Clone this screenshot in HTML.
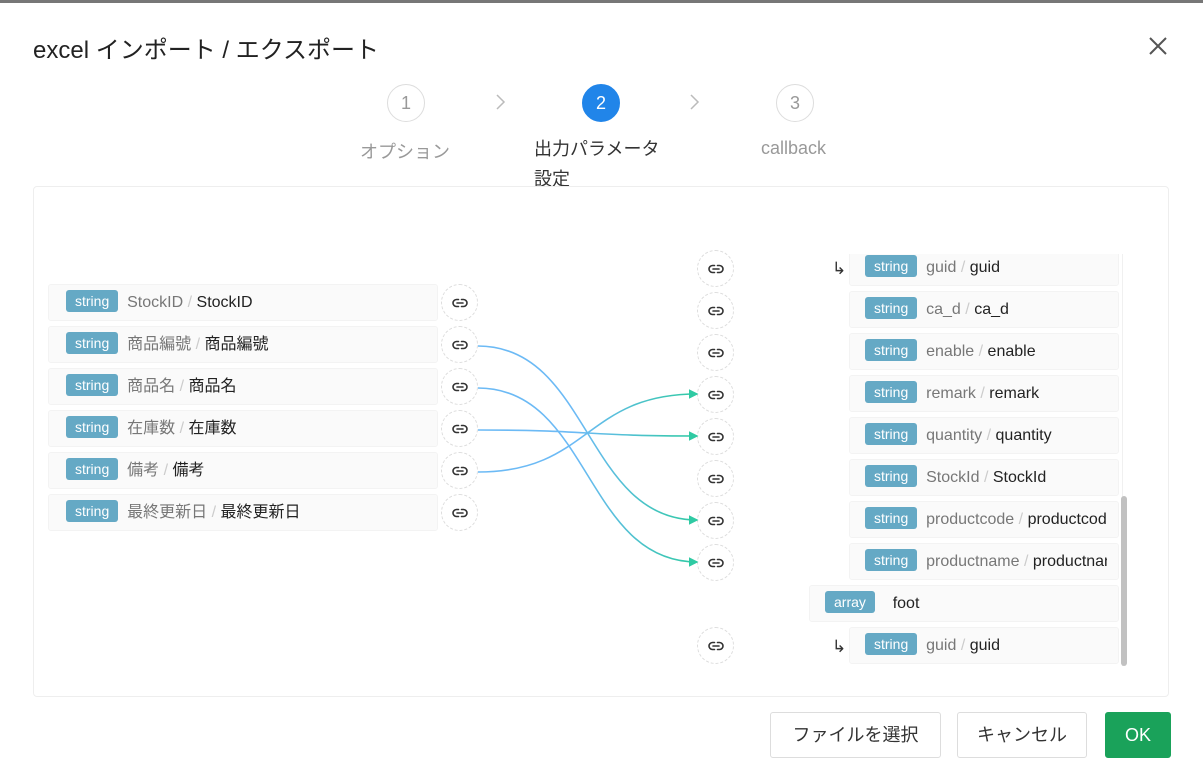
<!DOCTYPE html>
<html><head><meta charset="utf-8"><style>
*{box-sizing:border-box;margin:0;padding:0}
body{width:1203px;height:784px;overflow:hidden;background:#fff;font-family:"Liberation Sans","Noto Sans CJK JP",sans-serif;position:relative;color:#333}
.abs{position:absolute}
.topbar{left:0;top:0;width:1203px;height:3px;background:#777}
.modal{left:0;top:3px;width:1203px;height:781px;background:#fff;border-radius:6px 6px 0 0}
.title{left:33px;top:30px;font-size:24px;color:#222}
.step{width:38px;height:38px;border-radius:50%;border:1px solid #ddd;color:#999;font-size:18px;text-align:center;line-height:36px;top:84px}
.lbl{font-size:18px;color:#999;top:138px}
.box{left:33px;top:186px;width:1136px;height:511px;border:1px solid #eee;border-radius:4px}
.row{height:37px;background:#fafafa;border:1px solid #f3f3f3;border-radius:3px;font-size:16px;line-height:35px;white-space:nowrap;overflow:hidden}
.rr{padding-right:11px}
.in{display:block;overflow:hidden;white-space:nowrap}
.bd{display:inline-block;background:#65a9c5;color:#fff;font-size:14px;line-height:22px;height:22px;padding:0 9px;border-radius:3px;vertical-align:middle;margin-top:-3px}
.g{color:#777}.s{color:#ccc}.v{color:#222}
.lk{width:37px;height:37px;border-radius:50%;border:1px dashed #ddd;display:flex;align-items:center;justify-content:center;background:#fff}
.arr{font-size:17px;color:#333}
.btn{top:712px;height:46px;border:1px solid #ddd;border-radius:3px;font-size:18px;text-align:center;line-height:44px;color:#333;background:#fff}
</style></head><body>
<div class="abs topbar"></div>
<div class="abs modal"></div>
<div class="abs title">excel インポート / エクスポート</div>
<svg class="abs" style="left:1148px;top:36px" width="20" height="20"><path d="M2 2L18 18M18 2L2 18" stroke="#555" stroke-width="2"/></svg>

<div class="abs step" style="left:387px">1</div>
<div class="abs step" style="left:582px;background:#2185e9;border-color:#2185e9;color:#fff">2</div>
<div class="abs step" style="left:776px">3</div>
<svg class="abs" style="left:495px;top:93px" width="12" height="18"><path d="M2 2L9 9L2 16" stroke="#bbb" stroke-width="1.5" fill="none"/></svg>
<svg class="abs" style="left:689px;top:93px" width="12" height="18"><path d="M2 2L9 9L2 16" stroke="#bbb" stroke-width="1.5" fill="none"/></svg>
<div class="abs lbl" style="left:360px">オプション</div>
<div class="abs lbl" style="left:534px;color:#333;line-height:30px;top:134px">出力パラメータ<br>設定</div>
<div class="abs lbl" style="left:761px">callback</div>

<div class="abs box"></div>

<div class="abs row" style="left:48px;top:284px;width:390px;padding-left:17px"><span class="bd">string</span> <span class="g">&nbsp;StockID</span> <span class="s">/</span> <span class="v">StockID</span></div>
<div class="abs row" style="left:48px;top:326px;width:390px;padding-left:17px"><span class="bd">string</span> <span class="g">&nbsp;商品編號</span> <span class="s">/</span> <span class="v">商品編號</span></div>
<div class="abs row" style="left:48px;top:368px;width:390px;padding-left:17px"><span class="bd">string</span> <span class="g">&nbsp;商品名</span> <span class="s">/</span> <span class="v">商品名</span></div>
<div class="abs row" style="left:48px;top:410px;width:390px;padding-left:17px"><span class="bd">string</span> <span class="g">&nbsp;在庫数</span> <span class="s">/</span> <span class="v">在庫数</span></div>
<div class="abs row" style="left:48px;top:452px;width:390px;padding-left:17px"><span class="bd">string</span> <span class="g">&nbsp;備考</span> <span class="s">/</span> <span class="v">備考</span></div>
<div class="abs row" style="left:48px;top:494px;width:390px;padding-left:17px"><span class="bd">string</span> <span class="g">&nbsp;最終更新日</span> <span class="s">/</span> <span class="v">最終更新日</span></div>

<svg width="0" height="0" style="position:absolute"><defs><symbol id="lnk" viewBox="0 0 16 16"><path d="M6.5 4.5H4.5a3.5 3.5 0 0 0 0 7h2M9.5 4.5h2a3.5 3.5 0 0 1 0 7h-2M5 8h6" stroke="#333" stroke-width="1.6" fill="none" stroke-linecap="round"/></symbol></defs></svg>

<div class="abs lk" style="left:441px;top:284px"><svg width="16" height="16"><use href="#lnk"/></svg></div>
<div class="abs lk" style="left:441px;top:326px"><svg width="16" height="16"><use href="#lnk"/></svg></div>
<div class="abs lk" style="left:441px;top:368px"><svg width="16" height="16"><use href="#lnk"/></svg></div>
<div class="abs lk" style="left:441px;top:410px"><svg width="16" height="16"><use href="#lnk"/></svg></div>
<div class="abs lk" style="left:441px;top:452px"><svg width="16" height="16"><use href="#lnk"/></svg></div>
<div class="abs lk" style="left:441px;top:494px"><svg width="16" height="16"><use href="#lnk"/></svg></div>

<div class="abs lk" style="left:697px;top:250px"><svg width="16" height="16"><use href="#lnk"/></svg></div>
<div class="abs lk" style="left:697px;top:292px"><svg width="16" height="16"><use href="#lnk"/></svg></div>
<div class="abs lk" style="left:697px;top:334px"><svg width="16" height="16"><use href="#lnk"/></svg></div>
<div class="abs lk" style="left:697px;top:376px"><svg width="16" height="16"><use href="#lnk"/></svg></div>
<div class="abs lk" style="left:697px;top:418px"><svg width="16" height="16"><use href="#lnk"/></svg></div>
<div class="abs lk" style="left:697px;top:460px"><svg width="16" height="16"><use href="#lnk"/></svg></div>
<div class="abs lk" style="left:697px;top:502px"><svg width="16" height="16"><use href="#lnk"/></svg></div>
<div class="abs lk" style="left:697px;top:544px"><svg width="16" height="16"><use href="#lnk"/></svg></div>
<div class="abs lk" style="left:697px;top:627px"><svg width="16" height="16"><use href="#lnk"/></svg></div>

<svg class="abs" style="left:0;top:0" width="1203" height="784">
<defs><linearGradient id="gr" gradientUnits="userSpaceOnUse" x1="478" y1="0" x2="697" y2="0"><stop offset="0" stop-color="#6cbaf5"/><stop offset="0.45" stop-color="#6cbaf5"/><stop offset="1" stop-color="#2fcaa3"/></linearGradient>
<marker id="m" markerWidth="6" markerHeight="6" refX="5" refY="3" orient="auto"><path d="M0 0L6 3L0 6z" fill="#2fcaa3"/></marker></defs>
<g fill="none" stroke="url(#gr)" stroke-width="1.6" marker-end="url(#m)">
<path d="M478 346C590 346 585 520 697 520"/>
<path d="M478 388C590 388 585 562 697 562"/>
<path d="M478 430C590 430 585 436 697 436"/>
<path d="M478 472C590 472 585 394 697 394"/>
</g></svg>

<div class="abs" style="left:800px;top:254px;width:330px;height:412px;overflow:hidden">
<div class="abs row rr" style="left:49px;top:-5px;width:270px;padding-left:15px"><span class="in"><span class="bd">string</span> <span class="g">&nbsp;guid</span> <span class="s">/</span> <span class="v">guid</span></span></div>
<div class="abs arr" style="left:32px;top:5px">↳</div>
<div class="abs row rr" style="left:49px;top:37px;width:270px;padding-left:15px"><span class="in"><span class="bd">string</span> <span class="g">&nbsp;ca_d</span> <span class="s">/</span> <span class="v">ca_d</span></span></div>
<div class="abs row rr" style="left:49px;top:79px;width:270px;padding-left:15px"><span class="in"><span class="bd">string</span> <span class="g">&nbsp;enable</span> <span class="s">/</span> <span class="v">enable</span></span></div>
<div class="abs row rr" style="left:49px;top:121px;width:270px;padding-left:15px"><span class="in"><span class="bd">string</span> <span class="g">&nbsp;remark</span> <span class="s">/</span> <span class="v">remark</span></span></div>
<div class="abs row rr" style="left:49px;top:163px;width:270px;padding-left:15px"><span class="in"><span class="bd">string</span> <span class="g">&nbsp;quantity</span> <span class="s">/</span> <span class="v">quantity</span></span></div>
<div class="abs row rr" style="left:49px;top:205px;width:270px;padding-left:15px"><span class="in"><span class="bd">string</span> <span class="g">&nbsp;StockId</span> <span class="s">/</span> <span class="v">StockId</span></span></div>
<div class="abs row rr" style="left:49px;top:247px;width:270px;padding-left:15px"><span class="in"><span class="bd">string</span> <span class="g">&nbsp;productcode</span> <span class="s">/</span> <span class="v">productcode</span></span></div>
<div class="abs row rr" style="left:49px;top:289px;width:270px;padding-left:15px"><span class="in"><span class="bd">string</span> <span class="g">&nbsp;productname</span> <span class="s">/</span> <span class="v">productname</span></span></div>
<div class="abs row" style="left:9px;top:331px;width:310px;padding-left:15px"><span class="bd">array</span> <span class="v">&nbsp;&nbsp;&nbsp;foot</span></div>
<div class="abs row rr" style="left:49px;top:373px;width:270px;padding-left:15px"><span class="in"><span class="bd">string</span> <span class="g">&nbsp;guid</span> <span class="s">/</span> <span class="v">guid</span></span></div>
<div class="abs arr" style="left:32px;top:383px">↳</div>
<div class="abs" style="left:322px;top:0;width:1px;height:412px;background:#f0f0f0"></div>
<div class="abs" style="left:321px;top:242px;width:6px;height:170px;background:#c1c1c1;border-radius:3px"></div>
</div>

<div class="abs btn" style="left:770px;width:171px">ファイルを選択</div>
<div class="abs btn" style="left:957px;width:130px">キャンセル</div>
<div class="abs btn" style="left:1105px;width:66px;background:#1aa25a;border-color:#1aa25a;color:#fff">OK</div>
</body></html>
